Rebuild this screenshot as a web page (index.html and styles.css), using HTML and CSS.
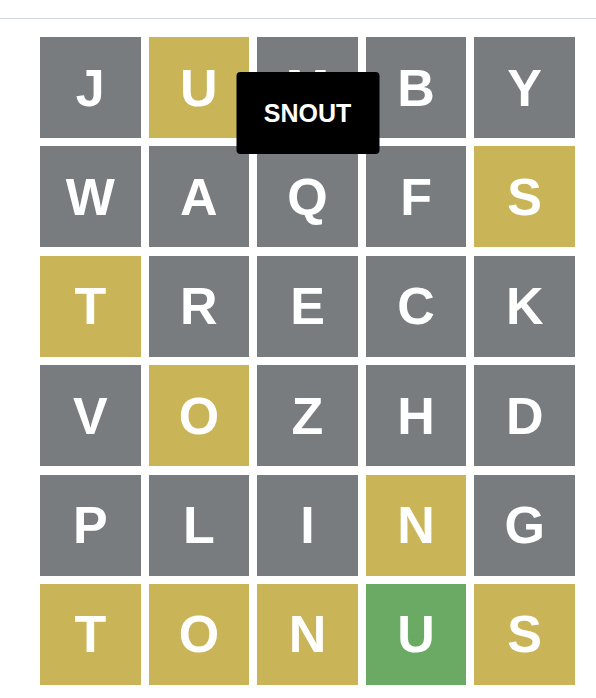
FILE: index.html
```html
<!DOCTYPE html>
<html>
<head>
<meta charset="utf-8">
<link rel="stylesheet" href="styles.css">
</head>
<body>
<header class="header"></header>
<main class="board-wrap">
  <div class="board">
    <div class="tile absent">J</div><div class="tile present">U</div><div class="tile absent">M</div><div class="tile absent">B</div><div class="tile absent">Y</div>
    <div class="tile absent">W</div><div class="tile absent">A</div><div class="tile absent">Q</div><div class="tile absent">F</div><div class="tile present">S</div>
    <div class="tile present">T</div><div class="tile absent">R</div><div class="tile absent">E</div><div class="tile absent">C</div><div class="tile absent">K</div>
    <div class="tile absent">V</div><div class="tile present">O</div><div class="tile absent">Z</div><div class="tile absent">H</div><div class="tile absent">D</div>
    <div class="tile absent">P</div><div class="tile absent">L</div><div class="tile absent">I</div><div class="tile present">N</div><div class="tile absent">G</div>
    <div class="tile present">T</div><div class="tile present">O</div><div class="tile present">N</div><div class="tile correct">U</div><div class="tile present">S</div>
  </div>
  <div class="toast">SNOUT</div>
</main>
</body>
</html>
```
FILE: styles.css
```css
html, body {
  margin: 0;
  padding: 0;
  background: #ffffff;
  font-family: "Liberation Sans", Arial, sans-serif;
}
.header {
  height: 18px;
  border-bottom: 1px solid #d3d6da;
}
.board-wrap {
  position: relative;
  width: 535px;
  margin: 18px 0 0 40px;
}
.board {
  display: grid;
  grid-template-columns: repeat(5, 1fr);
  grid-auto-rows: 101px;
  column-gap: 8px;
  row-gap: 8.4px;
}
.tile {
  display: flex;
  align-items: center;
  justify-content: center;
  color: #ffffff;
  font-weight: 700;
  font-size: 52px;
  line-height: 1;
}
.absent { background: #787c7e; }
.present { background: #c9b458; }
.correct { background: #6aaa64; }
.toast {
  position: absolute;
  top: 35px;
  left: 50%;
  transform: translateX(-50%);
  width: 143px;
  height: 82px;
  box-sizing: border-box;
  display: flex;
  align-items: center;
  justify-content: center;
  background: #000000;
  color: #ffffff;
  border-radius: 4px;
  font-weight: 700;
  font-size: 25px;
}
```
